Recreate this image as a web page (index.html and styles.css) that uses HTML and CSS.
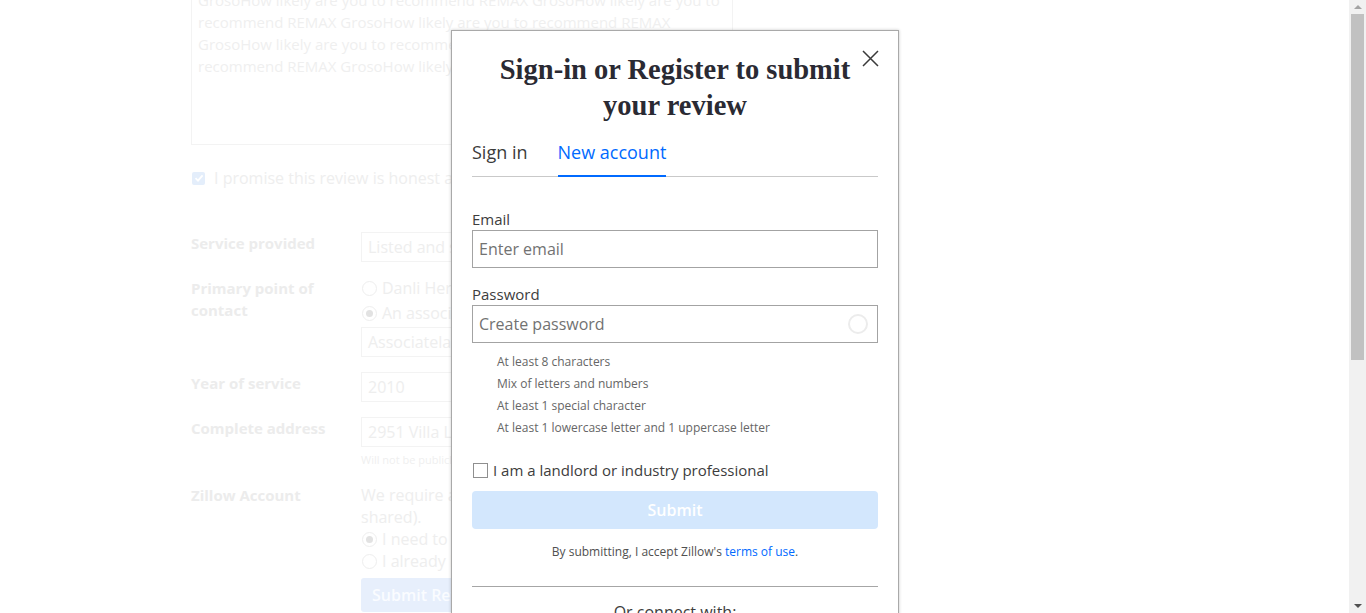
FILE: index.html
```html
<!DOCTYPE html>
<html>
<head>
<meta charset="utf-8">
<link rel="stylesheet" href="styles.css">
</head>
<body>
<div class="viewport">
  <main class="page">
    <div class="form">
      <div class="textarea">
        <div class="ta-line">GrosoHow likely are you to recommend REMAX GrosoHow likely are you to</div>
        <div class="ta-line">recommend REMAX GrosoHow likely are you to recommend REMAX</div>
        <div class="ta-line">GrosoHow likely are you to recommend REMAX GrosoHow likely are you to</div>
        <div class="ta-line">recommend REMAX GrosoHow likely are you to recommend REMAX</div>
      </div>
      <div class="promise">
        <span class="pcheck"><svg width="12" height="12" viewBox="0 0 12 12"><path d="M2.5 6.2 L5 8.6 L9.6 3.4" fill="none" stroke="#fff" stroke-width="1.8"/></svg></span>
        <span class="promise-text">I promise this review is honest and based on my own experience</span>
      </div>

      <div class="row r1">
        <div class="lbl">Service provided</div>
        <div class="field"><div class="fin">Listed and sold a home</div></div>
      </div>
      <div class="row r2">
        <div class="lbl">Primary point of contact</div>
        <div class="field">
          <div class="radio-row"><span class="radio"></span>Danli Hersh</div>
          <div class="radio-row second"><span class="radio on"></span>An associate on their team</div>
          <div class="fin mt3">Associatelarry Smith</div>
        </div>
      </div>
      <div class="row r3">
        <div class="lbl">Year of service</div>
        <div class="field"><div class="fin">2010</div></div>
      </div>
      <div class="row r4">
        <div class="lbl">Complete address</div>
        <div class="field">
          <div class="fin">2951 Villa Loma Dr, Los Angeles, CA</div>
          <div class="note">Will not be publicly displayed</div>
        </div>
      </div>
      <div class="row r5">
        <div class="lbl">Zillow Account</div>
        <div class="field">
          <div class="ftext">We require a Zillow account to submit a review (your email will not be<br>shared).</div>
          <div class="radio-row"><span class="radio on"></span>I need to create an account</div>
          <div class="radio-row"><span class="radio"></span>I already have an account</div>
          <div class="fbtn">Submit Review</div>
        </div>
      </div>
    </div>

    <section class="modal">
      <button class="close" aria-label="Close"><svg width="17" height="17" viewBox="0 0 17 17"><path d="M1 1 L16 16 M16 1 L1 16" stroke="#3a3a3a" stroke-width="1.5" fill="none"/></svg></button>
      <h1 class="title">Sign-in or Register to submit your review</h1>
      <div class="tabs">
        <div class="tab">Sign in</div>
        <div class="tab active">New account</div>
      </div>
      <div class="mlabel first">Email</div>
      <div class="minput">Enter email</div>
      <div class="mlabel">Password</div>
      <div class="minput pw">Create password<span class="spin"></span></div>
      <ul class="reqs">
        <li>At least 8 characters</li>
        <li>Mix of letters and numbers</li>
        <li>At least 1 special character</li>
        <li>At least 1 lowercase letter and 1 uppercase letter</li>
      </ul>
      <div class="pro"><span class="mcheck"></span>I am a landlord or industry professional</div>
      <div class="submit">Submit</div>
      <p class="terms">By submitting, I accept Zillow's <span class="link">terms of use</span>.</p>
      <hr class="sep">
      <p class="connect">Or connect with:</p>
    </section>
  </main>
  <div class="scrollbar">
    <div class="arrow up"></div>
    <div class="thumb"></div>
    <div class="track-rest"></div>
    <div class="arrow down"></div>
  </div>
</div>
</body>
</html>
```
FILE: styles.css
```css
html, body {
  margin: 0;
  padding: 0;
  height: 613px;
  overflow: hidden;
  background: #fff;
}
body {
  font-family: "Open Sans", "Liberation Sans", sans-serif;
}
.viewport {
  display: flex;
  height: 613px;
  width: 1366px;
}
.page {
  flex: 1;
  position: relative;
  overflow: hidden;
}
.form {
  margin-left: 191px;
  width: 542px;
  margin-top: -20px;
}
.textarea {
  box-sizing: border-box;
  height: 165px;
  border: 1px solid #f3f3f3;
  padding: 8px 6px;
  font-size: 15px;
  line-height: 22px;
  color: #efefef;
}
.ta-line { white-space: nowrap; }
.promise {
  display: flex;
  align-items: center;
  margin-top: 22px;
  height: 22px;
  color: #eeeeee;
  font-size: 16px;
}
.pcheck {
  width: 13px;
  height: 13px;
  margin-left: 1px;
  margin-right: 9px;
  background: #e4eefb;
  border-radius: 2px;
  display: flex;
  align-items: center;
  justify-content: center;
}
.promise-text { white-space: nowrap; }
.row {
  display: grid;
  grid-template-columns: 170px 1fr;
}
.r1 { margin-top: 43px; }
.r2 { margin-top: 15px; }
.r3 { margin-top: 15px; }
.r4 { margin-top: 15px; }
.r5 { margin-top: 16px; }
.lbl {
  font-weight: 700;
  font-size: 15px;
  line-height: 22px;
  color: #ececec;
  padding-right: 20px;
}
.field {
  color: #eeeeee;
  font-size: 16px;
}
.fin {
  box-sizing: border-box;
  height: 30px;
  border: 1px solid #f3f3f3;
  padding: 0 6px;
  line-height: 28px;
  white-space: nowrap;
}
.mt3 { margin-top: 3px; }
.radio-row {
  display: flex;
  align-items: center;
  height: 22px;
  white-space: nowrap;
}
.radio-row.second { margin-top: 3px; }
.radio {
  box-sizing: border-box;
  width: 15px;
  height: 15px;
  border: 1px solid #eeeeee;
  border-radius: 50%;
  margin-left: 1px;
  margin-right: 5px;
  position: relative;
  flex: none;
}
.radio.on::after {
  content: "";
  position: absolute;
  left: 3px;
  top: 3px;
  width: 7px;
  height: 7px;
  border-radius: 50%;
  background: #e2e2e2;
}
.note {
  font-size: 11px;
  line-height: 16px;
  margin-top: 5px;
  color: #efefef;
}
.ftext {
  line-height: 22px;
  white-space: nowrap;
}
.fbtn {
  margin-top: 6px;
  width: 170px;
  height: 34px;
  background: #e7effc;
  color: #fafcff;
  font-weight: 600;
  line-height: 34px;
  padding-left: 11px;
  border-radius: 3px;
  box-sizing: border-box;
}

/* modal */
.modal {
  position: absolute;
  left: 451px;
  top: 30px;
  width: 448px;
  box-sizing: border-box;
  height: 700px;
  background: #fff;
  border: 1px solid #a9a9a9;
  box-shadow: 0 0 3px rgba(0,0,0,0.22);
  padding: 21px 20px 0;
}
.close {
  position: absolute;
  right: 19px;
  top: 19px;
  width: 17px;
  height: 17px;
  padding: 0;
  border: 0;
  background: none;
  display: block;
}
.close svg { display: block; }
.title {
  margin: 0;
  font-family: "Liberation Serif", "Times New Roman", serif;
  font-weight: 700;
  font-size: 28.5px;
  line-height: 36px;
  color: #2a2a33;
  text-align: center;
  padding: 0 6px;
}
.tabs {
  display: flex;
  gap: 30px;
  margin-top: 16px;
  border-bottom: 1px solid #c9c9c9;
}
.tab {
  font-size: 18px;
  line-height: 24px;
  padding-bottom: 12px;
  color: #3b3b3b;
}
.tab.active {
  color: #006aff;
  border-bottom: 2px solid #006aff;
  margin-bottom: -1px;
  padding-bottom: 11px;
}
.mlabel {
  font-size: 15px;
  line-height: 20px;
  color: #3d3d3d;
  margin-top: 16px;
  margin-bottom: 1px;
}
.mlabel.first { margin-top: 32px; }
.minput {
  box-sizing: border-box;
  height: 38px;
  border: 1px solid #a3a3a3;
  padding: 0 6px;
  font-size: 16px;
  line-height: 36px;
  color: #727272;
  position: relative;
}
.spin {
  position: absolute;
  right: 9px;
  top: 8px;
  width: 20px;
  height: 20px;
  box-sizing: border-box;
  border: 2px solid #ececec;
  border-radius: 50%;
}
.reqs {
  list-style: none;
  margin: 8px 0 0;
  padding: 0 0 0 25px;
  font-size: 12px;
  line-height: 22px;
  color: #666;
}
.pro {
  display: flex;
  align-items: center;
  margin-top: 20px;
  height: 22px;
  font-size: 15px;
  color: #3d3d3d;
}
.mcheck {
  box-sizing: border-box;
  width: 15px;
  height: 15px;
  border: 1px solid #8f8f8f;
  margin-left: 1px;
  margin-right: 5px;
  background: #fff;
}
.submit {
  margin-top: 10px;
  height: 38px;
  background: #d3e7fd;
  border-radius: 4px;
  color: #fff;
  font-size: 16px;
  font-weight: 600;
  line-height: 38px;
  text-align: center;
}
.terms {
  margin: 15px 0 0;
  font-size: 12px;
  line-height: 16px;
  text-align: center;
  color: #505050;
}
.link { color: #006aff; }
.sep {
  margin: 26px 0 0;
  border: 0;
  border-top: 1px solid #a6a6a6;
  height: 0;
}
.connect {
  margin: 14px 0 0;
  font-size: 16px;
  line-height: 22px;
  text-align: center;
  color: #3d3d3d;
}

/* fake scrollbar */
.scrollbar {
  width: 17px;
  flex: none;
  background: #f1f1f1;
  display: flex;
  flex-direction: column;
  align-items: center;
}
.arrow {
  width: 0;
  height: 0;
  border-left: 4px solid transparent;
  border-right: 4px solid transparent;
  flex: none;
}
.arrow.up {
  border-bottom: 4px solid #a3a3a3;
  margin-top: 5px;
  margin-bottom: 5px;
}
.thumb {
  width: 13px;
  height: 346px;
  background: #c1c1c1;
  flex: none;
}
.track-rest { flex: 1; }
.arrow.down {
  border-top: 4px solid #505050;
  margin-bottom: 5px;
}
```
